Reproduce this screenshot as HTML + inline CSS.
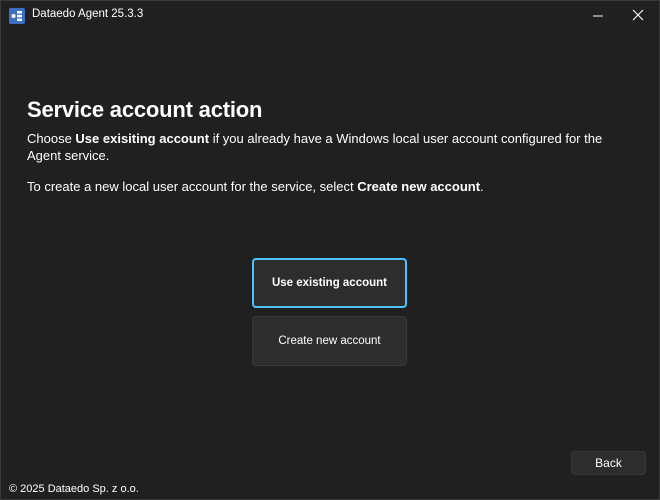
<!DOCTYPE html>
<html><head><meta charset="utf-8"><style>
*{margin:0;padding:0;box-sizing:border-box}
body{width:660px;height:500px;background:#202020;color:#fff;font-family:"Liberation Sans",sans-serif;position:relative;overflow:hidden}
.frame{position:absolute;inset:0;border:1px solid #3a3a3a;}
.ab{position:absolute;white-space:nowrap}
.title{left:32px;top:8px;font-size:11.5px;}
.h{left:27px;top:97px;font-size:22px;font-weight:bold;letter-spacing:-0.2px}
.p{left:27px;font-size:13px;color:#fff}
.btn{position:absolute;background:#2d2d2d;border:1px solid #383838;border-radius:4px;display:flex;align-items:center;justify-content:center;font-size:11.5px;color:#fff}
</style></head><body>
<div class="frame"></div>
<svg class="ab" style="left:9px;top:8px" width="16" height="16" viewBox="0 0 16 16">
<rect width="16" height="16" rx="2" fill="#3a6fc4"/>
<circle cx="4.5" cy="8" r="2" fill="#fff"/>
<rect x="8" y="3" width="5" height="2.5" fill="#fff"/>
<rect x="8" y="6.8" width="5" height="2.5" fill="#fff"/>
<rect x="8" y="10.6" width="5" height="2.5" fill="#fff"/>
</svg>
<div class="ab title">Dataedo Agent 25.3.3</div>
<svg class="ab" style="left:592px;top:10px" width="12" height="12"><line x1="1" y1="6" x2="11" y2="6" stroke="#fff" stroke-width="1"/></svg>
<svg class="ab" style="left:632px;top:9px" width="12" height="12"><path d="M1 1L11 11M11 1L1 11" stroke="#fff" stroke-width="1.1"/></svg>
<div class="ab h">Service account action</div>
<div class="ab p" style="top:131px">Choose <b>Use exisiting account</b> if you already have a Windows local user account configured for the</div>
<div class="ab p" style="top:148px">Agent service.</div>
<div class="ab p" style="top:179px">To create a new local user account for the service, select <b>Create new account</b>.</div>
<div class="btn" style="left:252px;top:258px;width:155px;height:50px;border:2px solid #4cc2ff;font-weight:bold">Use existing account</div>
<div class="btn" style="left:252px;top:316px;width:155px;height:50px">Create new account</div>
<div class="btn" style="left:571px;top:451px;width:75px;height:24px;font-size:12px">Back</div>
<div class="ab" style="left:9px;top:483px;font-size:11px">© 2025 Dataedo Sp. z o.o.</div>
</body></html>
